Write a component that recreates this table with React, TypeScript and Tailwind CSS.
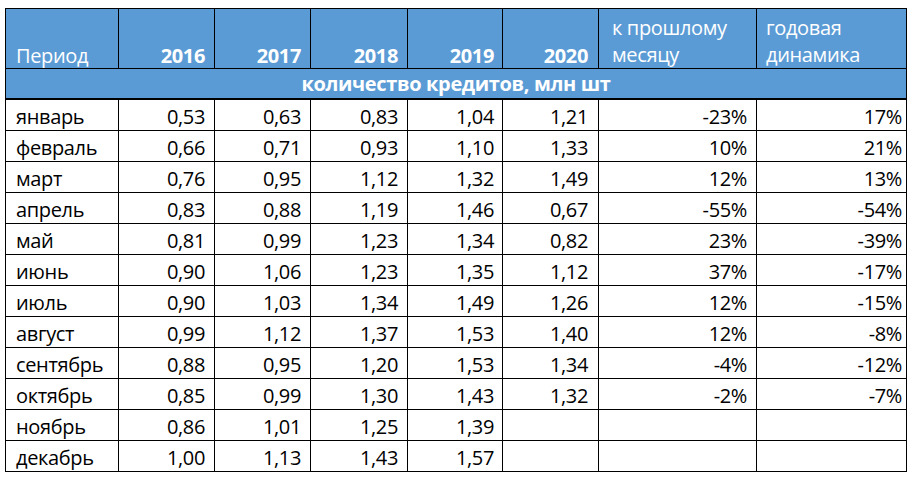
const rows: string[][] = [
  ["январь", "0,53", "0,63", "0,83", "1,04", "1,21", "-23%", "17%"],
  ["февраль", "0,66", "0,71", "0,93", "1,10", "1,33", "10%", "21%"],
  ["март", "0,76", "0,95", "1,12", "1,32", "1,49", "12%", "13%"],
  ["апрель", "0,83", "0,88", "1,19", "1,46", "0,67", "-55%", "-54%"],
  ["май", "0,81", "0,99", "1,23", "1,34", "0,82", "23%", "-39%"],
  ["июнь", "0,90", "1,06", "1,23", "1,35", "1,12", "37%", "-17%"],
  ["июль", "0,90", "1,03", "1,34", "1,49", "1,26", "12%", "-15%"],
  ["август", "0,99", "1,12", "1,37", "1,53", "1,40", "12%", "-8%"],
  ["сентябрь", "0,88", "0,95", "1,20", "1,53", "1,34", "-4%", "-12%"],
  ["октябрь", "0,85", "0,99", "1,30", "1,43", "1,32", "-2%", "-7%"],
  ["ноябрь", "0,86", "1,01", "1,25", "1,39", "", "", ""],
  ["декабрь", "1,00", "1,13", "1,43", "1,57", "", "", ""],
];

const years = ["2016", "2017", "2018", "2019", "2020"];

// right padding per column (Excel cells aren't perfectly even)
const padR = ["", "pr-[9px]", "pr-[9px]", "pr-[9px]", "pr-[8px]", "pr-[10px]", "pr-[9px]", "pr-[4px]"];

export default function App() {
  return (
    <div
      className="w-[917px] h-[478px] bg-white pt-[8px] pl-[5px] text-black"
      style={{ fontFamily: '"Open Sans", "Noto Sans", sans-serif' }}
    >
      <div className="grid w-[902px] grid-cols-[113px_96px_96px_97px_95px_96px_158px_150px] border-l border-t border-black text-[20px] tracking-[-0.35px]">
        {/* HEADER */}
        <div className="h-[60px] flex items-end pl-[10px] leading-[24px] bg-[#5b9bd5] text-white border-r border-b border-black">
          Период
        </div>
        {years.map((y, i) => (
          <div
            key={y}
            className={`h-[60px] flex items-end justify-end leading-[24px] font-bold bg-[#5b9bd5] text-white border-r border-b border-black ${padR[i + 1]}`}
          >
            {y}
          </div>
        ))}
        <div className="h-[60px] flex flex-col justify-end pl-[13px] leading-[27px] bg-[#5b9bd5] text-white border-r border-b border-black">
          <span>к прошлому</span>
          <span>месяцу</span>
        </div>
        <div className="h-[60px] flex flex-col justify-end pl-[9px] leading-[27px] bg-[#5b9bd5] text-white border-r border-b border-black">
          <span>годовая</span>
          <span>динамика</span>
        </div>

        {/* SUBHEADER */}
        <div className="col-span-8 h-[31px] flex items-end justify-center pb-[1px] leading-[26px] font-bold bg-[#5b9bd5] text-white border-r border-b-2 border-black">
          количество кредитов, млн шт
        </div>

        {/* DATA */}
        {rows.map((r) =>
          r.map((v, j) => (
            <div
              key={r[0] + j}
              className={`h-[31px] flex items-end leading-[26px] border-r border-b border-black ${
                j === 0 ? "pl-[10px]" : `justify-end ${padR[j]}`
              }`}
            >
              {v}
            </div>
          ))
        )}
      </div>
    </div>
  );
}
